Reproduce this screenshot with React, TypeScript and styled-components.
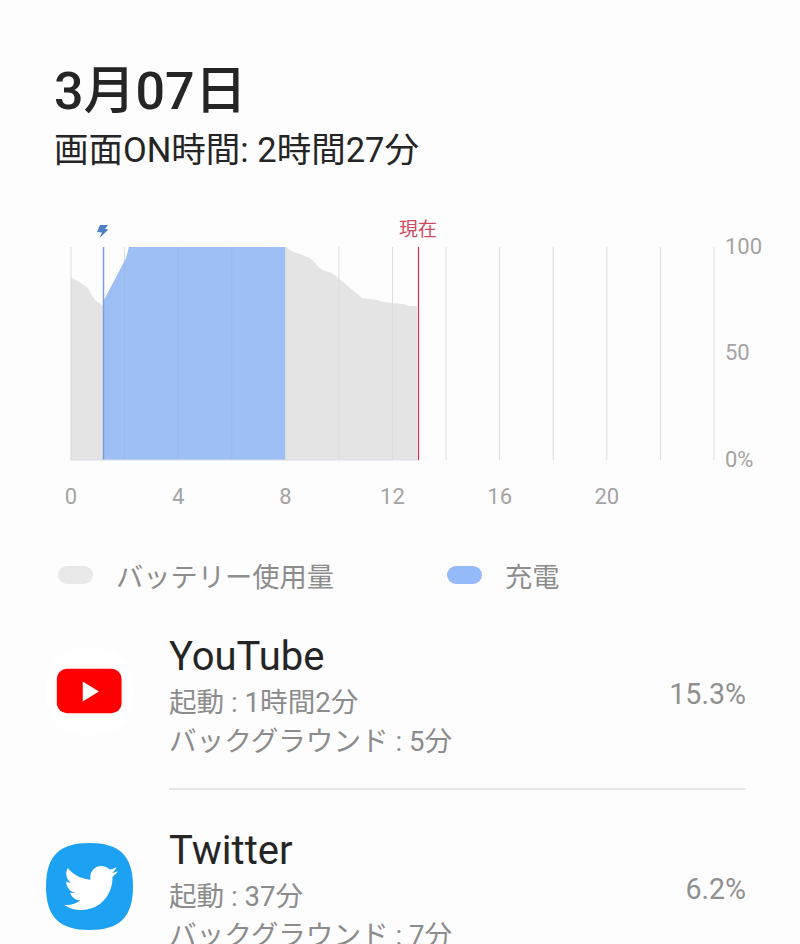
import React from "react";
import styled, { createGlobalStyle } from "styled-components";
import { FaTwitter } from "react-icons/fa";

const GlobalStyle = createGlobalStyle`
  html, body {
    margin: 0;
    padding: 0;
    background: #fdfdfd;
  }
  body {
    font-family: Roboto, "Noto Sans CJK JP", sans-serif;
  }
`;

const Page = styled.div`
  width: 800px;
  height: 944px;
  overflow: hidden;
  display: flex;
  flex-direction: column;
`;

const Header = styled.div`
  padding: 61px 0 0 54px;
  color: #252525;
`;

const DateTitle = styled.div`
  font-size: 52px;
  line-height: 62px;
  font-weight: 500;
`;

const ScreenTime = styled.div`
  font-size: 34.5px;
  line-height: 44px;
  margin-top: 5px;
`;

const ChartSvg = styled.svg`
  display: block;
  margin-top: 38px;
  width: 800px;
  height: 310px;
  flex: none;
`;

const Legend = styled.div`
  display: flex;
  align-items: center;
  padding: 35px 0 0 58px;
  height: 44px;
`;

const LegendItem = styled.div<{ $width: number }>`
  display: flex;
  align-items: center;
  gap: 23px;
  width: ${(p) => p.$width}px;
  font-size: 27.25px;
  color: #8c8c8c;
`;

const Swatch = styled.span<{ $color: string }>`
  width: 35px;
  height: 18px;
  border-radius: 9px;
  background: ${(p) => p.$color};
`;

const AppList = styled.div`
  display: flex;
  flex-direction: column;
  padding: 0 54px 0 46px;
`;

const AppRow = styled.div`
  display: flex;
  align-items: center;
  height: 194.5px;
  flex: none;
`;

const IconSlot = styled.div`
  width: 123px;
  flex: none;
  display: flex;
  align-items: center;
  padding-bottom: 1px;
`;

const AppBody = styled.div<{ $divider: boolean }>`
  flex: 1;
  height: 100%;
  display: flex;
  align-items: center;
  justify-content: space-between;
  box-sizing: border-box;
  padding-top: 6px;
  border-bottom: 2px solid ${(p) => (p.$divider ? "#e6e6e6" : "transparent")};
`;

const AppText = styled.div`
  padding-top: 5px;
`;

const AppName = styled.div`
  font-size: 40px;
  line-height: 48px;
  margin-bottom: 2px;
  color: #252525;
`;

const AppDetail = styled.div`
  font-size: 27.6px;
  line-height: 39px;
  color: #8c8c8c;
`;

const Percent = styled.div`
  font-size: 28.6px;
  color: #909090;
`;

const AxisText = styled.text`
  font-family: Roboto, sans-serif;
  font-size: 22px;
  fill: #a3a3a3;
`;

const NowText = styled.text`
  font-family: Roboto, "Noto Sans CJK JP", sans-serif;
  font-size: 19px;
  fill: #cf4a5e;
`;

const TOP = 37; // chart top inside the svg
const BOTTOM = 250;
const gridXs = Array.from({ length: 13 }, (_, i) => 71 + i * 53.58);
const hours = [0, 4, 8, 12, 16, 20];

const y = (v: number) => v - 210;

// where the filled area starts on each grid line that runs through it
const filledGridTops = [277, 262, 247, 247, 247, 278, 303];

function BatteryChart() {
  const before = [[71, 277], [87, 287], [95, 300], [103, 306]];
  const charging = [[103, 302], [126, 258], [129, 247], [285, 247]];
  const after = [
    [285, 247], [292, 251], [310, 258], [322, 270], [332, 273],
    [362, 298], [378, 300], [382, 302], [403, 304], [408, 306], [417, 306],
  ];
  const area = (pts: number[][]) =>
    `M${pts[0][0]} ${BOTTOM} ` +
    pts.map((p) => `L${p[0]} ${y(p[1])}`).join(" ") +
    ` L${pts[pts.length - 1][0]} ${BOTTOM} Z`;

  return (
    <ChartSvg viewBox="0 0 800 310">
      {gridXs.map((x) => (
        <line key={x} x1={x} x2={x} y1={TOP} y2={BOTTOM} stroke="#dedede" strokeWidth={1} />
      ))}
      <path d={area(before)} fill="#e4e4e4" />
      <path d={area(after)} fill="#e4e4e4" />
      <path d={area(charging)} fill="#9dbff6" />
      {filledGridTops.map((top, i) => (
        <line key={i} x1={gridXs[i]} x2={gridXs[i]} y1={y(top)} y2={BOTTOM} stroke="#000" strokeOpacity={0.035} strokeWidth={1} />
      ))}
      <line x1={103.5} x2={103.5} y1={TOP} y2={BOTTOM} stroke="#7c9fd6" strokeWidth={1.5} />
      <line x1={418.5} x2={418.5} y1={TOP} y2={BOTTOM} stroke="#dc2f4b" strokeWidth={1.2} />
      <line x1={71} x2={418} y1={BOTTOM} y2={BOTTOM} stroke="#d8dde6" strokeWidth={1} />
      <path d="M100 15 L108 15 L105 19 L108.5 19.5 L99.5 28 L102 22.5 L97 22 Z" fill="#4f7fc4" />
      <NowText x={418} y={26} textAnchor="middle">現在</NowText>
      <AxisText x={725} y={44}>100</AxisText>
      <AxisText x={725} y={150}>50</AxisText>
      <AxisText x={725} y={257}>0%</AxisText>
      {hours.map((h) => (
        <AxisText key={h} x={71 + (h / 2) * 53.58} y={294} textAnchor="middle">{h}</AxisText>
      ))}
    </ChartSvg>
  );
}

const SQUIRCLE = "M43 0 C72 0 86 12 86 43 C86 74 72 86 43 86 C14 86 0 74 0 43 C0 12 14 0 43 0 Z";

function YouTubeIcon() {
  return (
    <svg width="87" height="87" viewBox="0 0 86 86">
      <path d={SQUIRCLE} fill="#ffffff" />
      <rect x="10.7" y="20.5" width="64" height="44" rx="10" fill="#ff0000" />
      <path d="M36.3 33 L52.3 43 L36.3 53 Z" fill="#ffffff" />
    </svg>
  );
}

const TwitterWrap = styled.div`
  position: relative;
  width: 87px;
  height: 87px;
  svg { display: block; }
`;

const Bird = styled(FaTwitter)`
  position: absolute;
  left: 18px;
  top: 18px;
  width: 54px;
  height: 54px;
  color: #ffffff;
`;

function TwitterIcon() {
  return (
    <TwitterWrap>
      <svg width="87" height="87" viewBox="0 0 86 86">
        <path d={SQUIRCLE} fill="#1da1f2" />
      </svg>
      <Bird />
    </TwitterWrap>
  );
}

const apps = [
  { name: "YouTube", active: "起動 : 1時間2分", background: "バックグラウンド : 5分", percent: "15.3%", icon: <YouTubeIcon /> },
  { name: "Twitter", active: "起動 : 37分", background: "バックグラウンド : 7分", percent: "6.2%", icon: <TwitterIcon /> },
];

export default function App() {
  return (
    <Page>
      <GlobalStyle />
      <Header>
        <DateTitle>3月07日</DateTitle>
        <ScreenTime>画面ON時間: 2時間27分</ScreenTime>
      </Header>
      <BatteryChart />
      <Legend>
        <LegendItem $width={389}><Swatch $color="#e9e9e9" />バッテリー使用量</LegendItem>
        <LegendItem $width={200}><Swatch $color="#94bafa" />充電</LegendItem>
      </Legend>
      <AppList>
        {apps.map((app, i) => (
          <AppRow key={app.name}>
            <IconSlot>{app.icon}</IconSlot>
            <AppBody $divider={i === 0}>
              <AppText>
                <AppName>{app.name}</AppName>
                <AppDetail>{app.active}</AppDetail>
                <AppDetail>{app.background}</AppDetail>
              </AppText>
              <Percent>{app.percent}</Percent>
            </AppBody>
          </AppRow>
        ))}
      </AppList>
    </Page>
  );
}
